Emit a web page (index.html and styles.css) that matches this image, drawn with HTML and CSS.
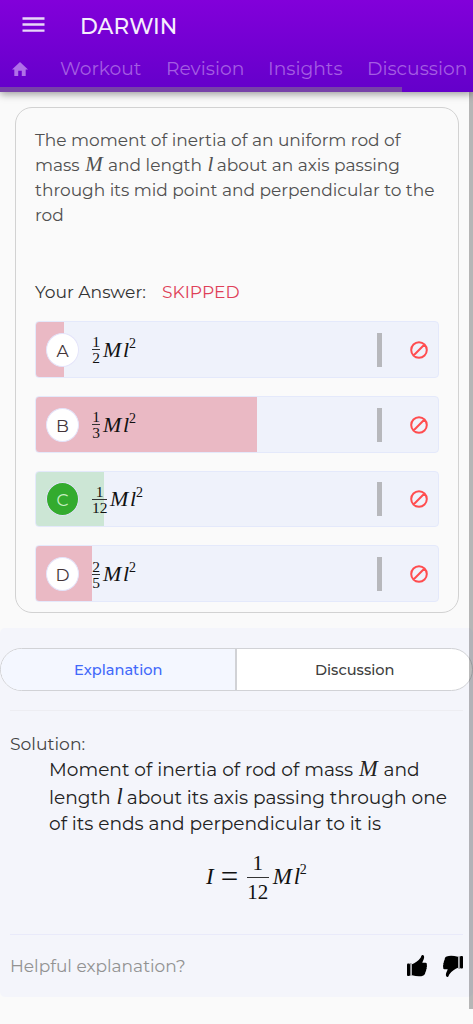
FILE: index.html
```html
<!DOCTYPE html>
<html lang="en">
<head>
<meta charset="utf-8">
<meta name="viewport" content="width=device-width, initial-scale=1">
<title>Darwin</title>
<link rel="stylesheet" href="styles.css">
</head>
<body>
<header class="header">
  <div class="topbar">
    <svg class="menu" width="23" height="17" viewBox="0 0 23 17"><path d="M.5 2.5h22M.5 8.5h22M.5 14.7h22" stroke="#e8d8f8" stroke-width="2.3"/></svg>
    <span class="brand">DARWIN</span>
  </div>
  <nav class="nav">
    <svg class="home" width="18" height="16" viewBox="0 0 18 16"><path d="M9 0 0 8.6h2.6V16H7v-6h4v6h4.4V8.6H18z" fill="#b070e8"/></svg>
    <span class="nav-workout">Workout</span><span class="nav-revision">Revision</span><span class="nav-insights">Insights</span><span class="nav-discussion">Discussion</span>
  </nav>
  <div class="progress"></div>
</header>
<main>
  <section class="card">
    <p class="question">
      <span class="line q1">The moment of inertia of an uniform rod of</span>
      <span class="line q2">mass <i class="var">M</i> and length <i class="var var-l">l</i> about an axis passing</span>
      <span class="line q3">through its mid point and perpendicular to the</span>
      <span class="line q4">rod</span>
    </p>
    <div class="answer"><span class="answer-label">Your Answer:</span><span class="skipped">SKIPPED</span></div>
    <div class="options">
      <div class="option fill-a"><span class="letter">A</span><span class="math"><span class="frac"><span>1</span><span>2</span></span><i class="m">M</i><i class="l">l</i><sup>2</sup></span><span class="bar"></span><svg class="ban" width="18" height="18" viewBox="0 0 18 18"><path d="M3.3 14.7 14.7 3.3M16.8 9A7.8 7.8 0 1 1 1.2 9a7.8 7.8 0 0 1 15.6 0z"/></svg></div>
      <div class="option fill-b"><span class="letter">B</span><span class="math"><span class="frac"><span>1</span><span>3</span></span><i class="m">M</i><i class="l">l</i><sup>2</sup></span><span class="bar"></span><svg class="ban" width="18" height="18" viewBox="0 0 18 18"><path d="M3.3 14.7 14.7 3.3M16.8 9A7.8 7.8 0 1 1 1.2 9a7.8 7.8 0 0 1 15.6 0z"/></svg></div>
      <div class="option fill-c"><span class="letter correct">C</span><span class="math"><span class="frac wide"><span>1</span><span>12</span></span><i class="m">M</i><i class="l">l</i><sup>2</sup></span><span class="bar"></span><svg class="ban" width="18" height="18" viewBox="0 0 18 18"><path d="M3.3 14.7 14.7 3.3M16.8 9A7.8 7.8 0 1 1 1.2 9a7.8 7.8 0 0 1 15.6 0z"/></svg></div>
      <div class="option fill-d"><span class="letter">D</span><span class="math"><span class="frac"><span>2</span><span>5</span></span><i class="m">M</i><i class="l">l</i><sup>2</sup></span><span class="bar"></span><svg class="ban" width="18" height="18" viewBox="0 0 18 18"><path d="M3.3 14.7 14.7 3.3M16.8 9A7.8 7.8 0 1 1 1.2 9a7.8 7.8 0 0 1 15.6 0z"/></svg></div>
    </div>
  </section>
  <section class="panel">
    <div class="tabs"><span class="tab active">Explanation</span><span class="tab">Discussion</span></div>
    <div class="solution">
      <div class="solution-title">Solution:</div>
      <div class="solution-text">
        <span class="line s1">Moment of inertia of rod of mass <i class="var">M</i> and</span>
        <span class="line s2">length <i class="var var-l">l</i> about its axis passing through one</span>
        <span class="line s3">of its ends and perpendicular to it is</span>
      </div>
      <div class="equation"><i>I</i><span class="eq">=</span><span class="frac big"><span>1</span><span>12</span></span><i class="m">M</i><i class="l">l</i><sup>2</sup></div>
    </div>
    <footer class="helpful">
      <span class="helpful-text">Helpful explanation?</span>
      <svg class="thumb" width="20" height="22" viewBox="0 0 20 22"><rect x="0" y="8.5" width="3" height="12.5" rx="1"/><path d="M3.9 8.2v12.5" stroke="#000" stroke-width=".7"/><path d="M5 9.3c2.8-1 6.3-3.2 8.6-6.5.6-1 .7-2.4 1.6-2.7 1.4-.3 2.1 1.1 1.9 2.5-.2 2-1.4 3.7-1.8 5.2h3.3c1.2.1 1.5 1.2 1.1 2.1.5.8.4 1.7-.1 2.4.3.9.1 1.8-.5 2.4.2 1-.1 1.7-.7 2.3-.1 1.6-.5 2.7-2 3.4-2.8 1.5-6.8 1.1-11.4-.1z"/></svg>
      <svg class="thumb" width="20" height="22" viewBox="0 0 20 22"><g transform="rotate(180 10 11)"><rect x="0" y="8.5" width="3" height="12.5" rx="1"/><path d="M3.9 8.2v12.5" stroke="#000" stroke-width=".7"/><path d="M5 9.3c2.8-1 6.3-3.2 8.6-6.5.6-1 .7-2.4 1.6-2.7 1.4-.3 2.1 1.1 1.9 2.5-.2 2-1.4 3.7-1.8 5.2h3.3c1.2.1 1.5 1.2 1.1 2.1.5.8.4 1.7-.1 2.4.3.9.1 1.8-.5 2.4.2 1-.1 1.7-.7 2.3-.1 1.6-.5 2.7-2 3.4-2.8 1.5-6.8 1.1-11.4-.1z"/></g></svg>
    </footer>
  </section>
</main>
<div class="scrollbar"></div>
</body>
</html>
```
FILE: styles.css
```css
* { box-sizing: border-box; }
body { margin: 0; height: 1024px; overflow: hidden; position: relative; background: #fafafa; color: #505050; font-family: Montserrat, Inter, sans-serif; }
p { margin: 0; }
.header { position: relative; z-index: 3; height: 92px; display: flex; flex-direction: column; background: linear-gradient(#8200da, #6400ca); box-shadow: 0 2px 8px rgba(0,0,0,.4); }
.topbar { height: 52px; display: flex; align-items: center; padding-left: 22px; }
.menu { margin-top: -3px; }
.brand { margin: 0 0 0 35px; color: #f6eefd; font-size: 21.6px; font-weight: 500; line-height: 26px; }
.nav { height: 35px; display: flex; align-items: center; padding-bottom: 2px; color: #a45de2; font-size: 18.7px; font-weight: 400; line-height: 30px; white-space: nowrap; }
.home { margin: 0 32px 0 12px; }
.nav span { width: 106px; flex: none; }
.nav .nav-revision { width: 102px; }
.nav .nav-insights { width: 99px; }
.progress { width: 402px; height: 5px; background: #7742a8; }
.card { height: 506px; margin: 15px 14px 0 15px; padding: 20px 19px 0; border: 1px solid #d2d2d2; border-radius: 17px; }
.line { display: block; height: 25px; line-height: 25px; white-space: nowrap; }
.question { height: 148px; font-size: 17px; }
.var { padding: 0 1px; font-family: "Liberation Serif", serif; font-size: 21px; line-height: 1px; }
.var-l { padding: 0 0 0 1px; margin-right: -1px; }
.answer { height: 45px; line-height: 32px; font-size: 17.1px; display: flex; }
.answer-label { width: 127px; color: #333; }
.skipped { color: #df4058; }
.options { display: flex; flex-direction: column; gap: 18px; }
.option { height: 56.8px; display: flex; align-items: center; padding: 1px 10px 0; border: 1px solid #e4e9fb; border-radius: 4px; background: #eff2fb; }
.fill-a { background: linear-gradient(90deg, #eab9c4 28px, #eff2fb 28px); }
.fill-b { background: linear-gradient(90deg, #eab9c4 221px, #eff2fb 221px); }
.fill-c { background: linear-gradient(90deg, #cce6d5 68px, #eff2fb 68px); }
.fill-d { background: linear-gradient(90deg, #eab9c4 56px, #eff2fb 56px); }
.letter { width: 33px; height: 34px; border: 1px solid #e4e4fa; border-radius: 50%; background: #fff; color: #443539; font-size: 17px; line-height: 35px; text-align: center; }
.correct { background: #33ab2e; color: #c8f0c4; }
.math, .equation { display: flex; align-items: center; font-family: "Liberation Serif", serif; color: #111; }
.math { width: 250px; margin-left: 13px; font-size: 22px; line-height: 26px; }
.frac { width: 8px; font-size: 15.5px; line-height: 15px; display: flex; flex-direction: column; align-items: center; }
.frac span { width: 100%; text-align: center; }
.frac span:first-child { border-bottom: 1px solid #333; }
.frac.wide { width: 15px; }
.m { margin-left: 3px; width: 20px; }
.l { width: 6px; }
sup { font-size: 14px; line-height: 14px; margin-bottom: 12px; vertical-align: baseline; }
.bar { width: 5px; height: 34px; margin-left: 35px; background: #b7b8bc; }
.ban { margin-left: auto; fill: none; stroke: #ff4d4f; stroke-width: 2; }
.panel { height: 369px; margin-top: 15px; padding-top: 20px; background: #f4f5fb; border-radius: 5px; }
.tabs { height: 43px; display: flex; border: 1px solid #d1d2d6; border-radius: 22px; background: #fff; overflow: hidden; }
.tab { width: 50%; padding-left: 1px; text-align: center; font-size: 14.6px; font-weight: 500; line-height: 42px; color: #404040; }
.active { background: #f4f7ff; border-right: 2px solid #d1d2d6; color: #4269fa; }
.solution { height: 225px; margin: 19px 10px 0; padding-top: 20px; border-top: 1px solid #ededf2; border-bottom: 1px solid #e9eafa; }
.solution-title { height: 25px; line-height: 25px; font-size: 17.2px; color: #444; }
.solution-text { padding-left: 39px; font-size: 18.6px; color: #222; }
.solution-text .line { height: 27px; line-height: 28px; }
.solution-text .var { font-size: 22.5px; }
.solution-text .s1 { height: 28px; }
.solution-text .s3 { line-height: 26px; }
.equation { margin-left: 196px; height: 78px; font-size: 23px; line-height: 28px; }
.eq { margin: 0 8px 0 7px; width: 18px; font-size: 31px; }
.frac.big { width: 22px; font-size: 21px; line-height: 28px; }
.equation .m { margin-left: 4px; width: 21px; }
.equation .l { width: 6px; }
.equation sup { margin-bottom: 14px; }
.helpful { display: flex; align-items: center; height: 62px; padding: 1px 10px; gap: 16px; }
.helpful-text { color: #929292; font-size: 17px; width: 381px; flex: none; }
.thumb { flex: none; }
.scrollbar { position: absolute; z-index: 2; right: 0; top: 0; width: 4.5px; height: 1009px; background: rgba(0,0,0,.27); }
```
